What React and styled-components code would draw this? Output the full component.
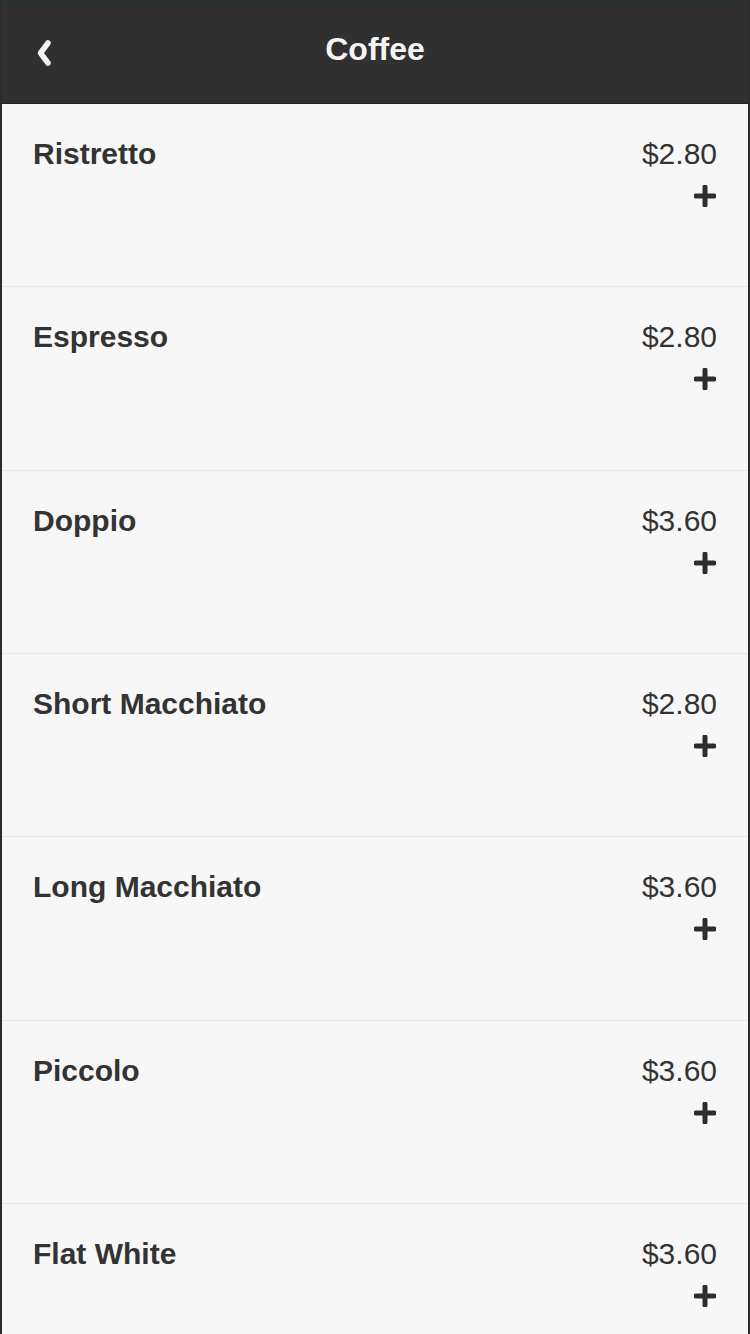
import React from "react";
import styled, { createGlobalStyle } from "styled-components";

const GlobalStyle = createGlobalStyle`
  html, body {
    margin: 0;
    padding: 0;
    background: #f7f7f7;
  }
  body {
    font-family: "Liberation Sans", Arial, Helvetica, sans-serif;
    -webkit-font-smoothing: antialiased;
  }
`;

const Screen = styled.div`
  width: 750px;
  height: 1334px;
  box-sizing: border-box;
  overflow: hidden;
  background: #f7f7f7;
  border-left: 2px solid #2b2b2b;
  border-right: 2px solid #2b2b2b;
  display: flex;
  flex-direction: column;
`;

const TopBar = styled.header`
  flex: 0 0 auto;
  height: 104px;
  box-sizing: border-box;
  margin: 0 -2px;
  background: #303030;
  border-top: 2px solid #26343a;
  border-bottom: 1px solid #222;
  display: grid;
  grid-template-columns: 90px 1fr 90px;
  align-items: center;
`;

const BackButton = styled.button`
  justify-self: start;
  margin-left: 32px;
  padding: 0;
  background: none;
  border: none;
  width: 24px;
  height: 30px;
  display: flex;
  align-items: center;
  justify-content: center;
`;

const Title = styled.h1`
  margin: 0;
  margin-top: -8px;
  text-align: center;
  color: #f4f4f4;
  font-family: "Liberation Sans", Arial, sans-serif;
  font-size: 32px;
  font-weight: 700;
  line-height: 36px;
`;

const List = styled.ul`
  list-style: none;
  margin: 0;
  padding: 0;
`;

const Row = styled.li`
  height: 183.33px;
  box-sizing: border-box;
  padding: 33px 31px 0 31px;
  border-bottom: 1px solid #e6e6e6;
  display: flex;
  justify-content: space-between;
  align-items: flex-start;
`;

const Name = styled.span`
  color: #333333;
  font-family: "Liberation Sans", Arial, sans-serif;
  font-size: 30px;
  font-weight: 700;
  line-height: 34px;
`;

const PriceCol = styled.div`
  display: flex;
  flex-direction: column;
  align-items: flex-end;
`;

const Price = styled.span`
  color: #333333;
  font-family: "Liberation Sans", Arial, sans-serif;
  font-size: 30px;
  font-weight: 400;
  line-height: 34px;
`;

const AddButton = styled.button`
  margin-top: 13px;
  margin-right: 0;
  padding: 0;
  width: 24px;
  height: 24px;
  background: none;
  border: none;
  display: flex;
  align-items: center;
  justify-content: center;
`;

const ChevronLeft = () => (
  <svg width="20" height="28" viewBox="0 0 20 28" aria-hidden="true">
    <path
      d="M14 4 L6.5 14 L14 24"
      fill="none"
      stroke="#f4f4f4"
      strokeWidth="5.5"
      strokeLinecap="round"
      strokeLinejoin="round"
    />
  </svg>
);

const PlusIcon = () => (
  <svg width="22" height="22" viewBox="0 0 22 22" aria-hidden="true">
    <path
      d="M11 2 V20 M2 11 H20"
      fill="none"
      stroke="#2e2e2e"
      strokeWidth="5"
      strokeLinecap="round"
    />
  </svg>
);

const items = [
  { name: "Ristretto", price: "$2.80" },
  { name: "Espresso", price: "$2.80" },
  { name: "Doppio", price: "$3.60" },
  { name: "Short Macchiato", price: "$2.80" },
  { name: "Long Macchiato", price: "$3.60" },
  { name: "Piccolo", price: "$3.60" },
  { name: "Flat White", price: "$3.60" },
];

export default function App() {
  return (
    <>
      <GlobalStyle />
      <Screen>
        <TopBar>
          <BackButton aria-label="Back">
            <ChevronLeft />
          </BackButton>
          <Title>Coffee</Title>
          <span />
        </TopBar>
        <List>
          {items.map((it) => (
            <Row key={it.name}>
              <Name>{it.name}</Name>
              <PriceCol>
                <Price>{it.price}</Price>
                <AddButton aria-label={`Add ${it.name}`}>
                  <PlusIcon />
                </AddButton>
              </PriceCol>
            </Row>
          ))}
        </List>
      </Screen>
    </>
  );
}
